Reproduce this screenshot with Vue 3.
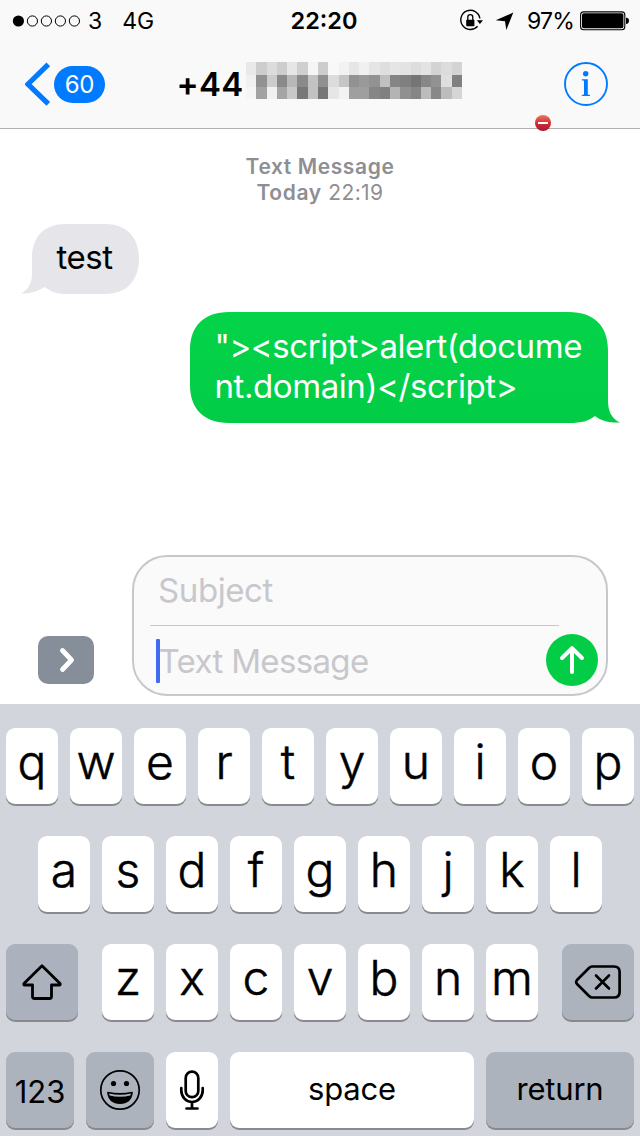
<script setup>
const mosaic = [
  'e9 cd dc cd e6 cf f5 cd f8 f2 e6 f0 e5 de e5 e3 dd e3 d3 dc d3',
  'f0 92 cc 8a b8 8a c2 90 dc c5 92 99 92 c0 85 80 75 87 92 df 80',
  'f5 a2 f0 a5 c8 78 c2 76 e6 f2 9f 9f 86 80 b4 90 86 bc 88 bc d5'
].map(row => row.split(' ').map(v => `#${v}${v}${v}`))
const topRow = 'qwertyuiop'.split('')
const homeRow = 'asdfghjkl'.split('')
const lowerRow = 'zxcvbnm'.split('')
const sent = ['"><script>alert(docume', 'nt.domain)<\/script>']
</script>

<template>
  <div class="phone">
    <header class="header">
      <div class="status">
        <div class="status-left">
          <svg class="dots" width="70" height="14" viewBox="0 0 70 14">
            <circle cx="6.4" cy="7" r="5.6" fill="#000" />
            <circle v-for="n in 4" :key="n" :cx="6.4 + n * 14" cy="7" r="5.1" fill="none" stroke="#000" stroke-width="1" />
          </svg>
          <span class="carrier">3</span>
          <span class="network">4G</span>
        </div>
        <span class="clock">22:20</span>
        <div class="status-right">
          <svg class="lock" width="24" height="24" viewBox="0 0 24 24" fill="none" stroke="#000">
            <path d="M20.9 9.5A9.6 9.6 0 1 0 18.6 17.2" stroke-width="1.4" />
            <path d="M17.8 11.3H24L20.9 15Z" fill="#000" stroke="none" />
            <rect x="7.2" y="10.8" width="8.2" height="6.4" rx=".7" fill="#000" stroke="none" />
            <path d="M8.8 11V8.2a2.5 2.5 0 0 1 5 0V11" stroke-width="1.3" />
          </svg>
          <svg class="arrow" width="19" height="19" viewBox="0 0 19 19"><path d="M18.3.6 11.3 18 10 9.3 .7 8.2Z" /></svg>
          <span class="percent">97%</span>
          <svg class="battery" width="50" height="20" viewBox="0 0 50 20">
            <rect x=".6" y=".9" width="44.2" height="17.8" rx="3" fill="none" stroke="#000" stroke-width="1.1" />
            <rect x="2" y="2.3" width="41.4" height="15" rx="1.8" />
            <path d="M46 6.5c2 .3 3 1.500 3 3.300s-1 3-3 3.300Z" />
          </svg>
        </div>
      </div>
      <nav class="nav">
        <div class="back">
          <svg width="26" height="44" viewBox="0 0 26 44"><path d="M23.300 2.300 2.900 22.200 23.300 41.800" fill="none" stroke="#007aff" stroke-width="5.200" /></svg>
          <span class="badge">60</span>
        </div>
        <div class="title">
          <span>+44</span>
          <div class="mosaic">
            <template v-for="(row, r) in mosaic" :key="r">
              <i v-for="(c, n) in row" :key="n" :style="{ background: c }"></i>
            </template>
          </div>
        </div>
        <svg class="info" width="46" height="46" viewBox="0 0 46 46" fill="#007aff">
          <circle cx="23" cy="23" r="21" fill="none" stroke="#007aff" stroke-width="1.900" />
          <circle cx="22.700" cy="12.700" r="2.700" />
          <path d="M18.800 18.200H24.800V33.400L27 34V35H18.800V34L21 33.400V19.800L18.800 19.300Z" />
        </svg>
      </nav>
      <svg class="stop" width="16" height="16" viewBox="0 0 16 16">
        <defs><linearGradient id="red" x2="0" y2="1"><stop stop-color="#ea7a5c" /><stop offset=".5" stop-color="#d32f32" /><stop offset="1" stop-color="#a5173b" /></linearGradient></defs>
        <circle cx="8" cy="8" r="8" fill="url(#red)" />
        <rect x="3" y="7" width="10" height="2" fill="#fff" />
      </svg>
    </header>

    <main class="thread">
      <div class="stamp">
        <div class="kind">Text Message</div>
        <div class="when"><b>Today</b> <span>22:19</span></div>
      </div>
      <div class="bubble received">
        <svg class="shape" width="119" height="70" viewBox="21 224 119 70">
          <path fill="#e5e5ea" d="M66 224H105C127 224 139 238 139 258.500C139 280 127 294 105 294H66C56 294 50 291 45 287C38 291 30 294 21 293.500C29 289 32 282 32 274V258C32 237 44 224 66 224Z" />
        </svg>
        <span class="line">test</span>
      </div>
      <div class="bubble sent">
        <svg class="shape" width="430" height="111" viewBox="190 312 430 111">
          <defs><linearGradient id="green" x2="0" y2="1"><stop stop-color="#04d449" /><stop offset="1" stop-color="#02cc46" /></linearGradient></defs>
          <path fill="url(#green)" d="M229 312H569C594 312 608 326 608 350V400C608 411 611 418 620 422.500C610 423 601 421 595 416C588 421 582 423 569 423H229C204 423 190 409 190 385V350C190 326 204 312 229 312Z" />
        </svg>
        <span v-for="(l, i) in sent" :key="i" class="line">{{ l }}</span>
      </div>
      <div class="compose">
        <div class="expand">
          <svg width="16" height="26" viewBox="0 0 16 26"><path d="M3.500 3.500 12.500 13 3.500 22.500" fill="none" stroke="#fff" stroke-width="4.800" stroke-linecap="round" stroke-linejoin="round" /></svg>
        </div>
        <div class="field">
          <div class="subject"><span>Subject</span></div>
          <div class="message">
            <i class="caret"></i>
            <span class="hint">Text Message</span>
            <svg class="send" width="52" height="52" viewBox="0 0 52 52">
              <circle cx="26" cy="26" r="26" fill="#03cc46" />
              <path d="M26 38V14.500M16 24 26 14.200 36 24" fill="none" stroke="#fff" stroke-width="4" stroke-linecap="round" stroke-linejoin="round" />
            </svg>
          </div>
        </div>
      </div>
    </main>

    <section class="keyboard">
      <div class="row"><div v-for="k in topRow" :key="k" class="key"><span>{{ k }}</span></div></div>
      <div class="row"><div v-for="k in homeRow" :key="k" class="key"><span>{{ k }}</span></div></div>
      <div class="row spread">
        <div class="key wide shift">
          <svg width="42" height="38" viewBox="0 0 42 38"><path d="M21 2.800 39 20.400Q39.800 22 38.200 22H30.500V33.500Q30.500 35.500 28.500 35.500H13.500Q11.500 35.500 11.500 33.500V22H3.800Q2.200 22 3 20.400Z" fill="none" stroke="#000" stroke-width="2.800" stroke-linejoin="round" /></svg>
        </div>
        <div class="letters"><div v-for="k in lowerRow" :key="k" class="key"><span>{{ k }}</span></div></div>
        <div class="key wide dark">
          <svg width="48" height="36" viewBox="0 0 48 36" fill="none" stroke="#000" stroke-linecap="round" stroke-linejoin="round">
            <path d="M18 2.500H40Q45.600 2.500 45.600 8V28Q45.600 33.500 40 33.500H18Q16.600 33.500 15 32L3 20Q1.400 18 3 16L15 4Q16.600 2.500 18 2.500Z" stroke-width="2.700" />
            <path d="M22 11.500 35 24.500M35 11.500 22 24.500" stroke-width="2.600" />
          </svg>
        </div>
      </div>
      <div class="row">
        <div class="key fn dark"><span class="num">123</span></div>
        <div class="key fn dark">
          <svg width="42" height="42" viewBox="0 0 42 42">
            <circle cx="21" cy="21" r="19.200" fill="none" stroke="#000" stroke-width="1.700" />
            <circle cx="14.500" cy="14.500" r="2.600" /><circle cx="27.500" cy="14.500" r="2.600" />
            <path d="M9 23.600Q21 26 33 23.600Q31.500 34 21 34T9 23.600Z" stroke="#000" stroke-width="1.800" stroke-linejoin="round" />
            <path d="M10 24.500Q21 27 32 24.500L31.300 26.400Q21 29 10.700 26.400Z" fill="#acb3bd" />
          </svg>
        </div>
        <div class="key">
          <svg width="26" height="42" viewBox="0 0 26 42" fill="none" stroke="#000" stroke-width="2.700" stroke-linecap="round">
            <rect x="6.700" y="2.700" width="12.600" height="25.500" rx="6.300" />
            <path d="M2.300 19V21.500A10.700 11.500 0 0 0 23.700 21.500V19M13 33V39M7.500 39.500H18.500" />
          </svg>
        </div>
        <div class="key space"><span class="word">space</span></div>
        <div class="key return dark"><span class="word">return</span></div>
      </div>
    </section>
  </div>
</template>

<style>
body { margin: 0; background: #fff; }
</style>

<style scoped>
.phone { width: 640px; height: 1136px; overflow: hidden; display: flex; flex-direction: column; background: #fff; color: #000; font-family: Inter, "Liberation Sans", sans-serif; }
.phone svg { display: block; flex: none; }
span { white-space: pre; }
.header { position: relative; box-sizing: border-box; height: 129px; background: #f9f9f9; border-bottom: 1px solid #b2b2b2; }
.status { height: 41px; display: grid; grid-template-columns: 1fr auto 1fr; align-items: center; font-size: 23px; line-height: 41px; }
.status span { padding-top: 1px; }
.status-left, .status-right { display: flex; align-items: center; }
.status-left { padding-left: 12px; }
.carrier { margin-left: 6px; }
.network { margin-left: 20px; }
.status .clock { font-weight: 600; font-size: 23.5px; padding: 0 0 1px 8px; }
.status-right { justify-content: flex-end; padding-right: 10px; }
.arrow { margin-left: 12px; }
.percent { margin-left: 13px; letter-spacing: -.8px; }
.battery { margin-left: 6px; }
.nav { height: 85px; display: flex; align-items: center; padding-bottom: 1px; }
.back { display: flex; align-items: center; padding-left: 25px; width: 151.500px; }
.badge { margin: 1px 0 0 3px; width: 51px; height: 37px; border-radius: 19px; background: #007aff; color: #fff; font-size: 24px; line-height: 38px; text-align: center; letter-spacing: -.2px; }
.title { display: flex; font-size: 33px; font-weight: 600; line-height: 40px; width: 385.500px; }
.title span { letter-spacing: .3px; }
.mosaic { display: grid; grid-template-columns: repeat(21, 1fr); grid-template-rows: 13px 12px 12px; width: 216px; height: 37px; margin-top: -2px; margin-left: 2.500px; }
.info { margin-left: 1px; }
.stop { position: absolute; left: 535px; top: 115px; }
.thread { height: 575px; display: flex; flex-direction: column; }
.stamp { margin-top: 25px; text-align: center; font-size: 21px; line-height: 26px; color: #8e8e93; letter-spacing: .6px; }
.kind, .stamp b { font-weight: 600; }
.when span { letter-spacing: .4px; }
.bubble { position: relative; font-size: 33px; line-height: 40px; display: flex; flex-direction: column; letter-spacing: -.42px; }
.shape { position: absolute; top: 0; left: 0; z-index: 0; }
.line { position: relative; z-index: 1; }
.received { margin: 18px 0 0 21px; height: 57px; padding: 13px 0 0 35.500px; width: 83px; }
.sent { margin: 18px 0 0 190px; height: 97px; padding: 14px 0 0 24.500px; width: 405px; color: #fff; }
.compose { margin: 132px 0 0 38px; display: flex; align-items: flex-end; }
.expand { width: 56px; height: 48px; border-radius: 10px; background: #858e99; display: flex; align-items: center; justify-content: center; margin-bottom: 12px; padding-left: 2px; box-sizing: border-box; }
.field { box-sizing: border-box; width: 476px; height: 141px; margin-left: 38px; border: 2px solid #c7c7cc; border-radius: 35px; background: #fafafa; font-size: 33px; color: #c7c7cc; letter-spacing: -.4px; }
.subject { box-sizing: border-box; height: 69px; width: 409px; margin-left: 16px; border-bottom: 1px solid #c7c7cc; padding-left: 8px; line-height: 66px; }
.message { height: 68px; display: flex; align-items: center; padding-left: 22px; }
.caret { width: 4px; height: 44px; border-radius: 1px; background: #426bf2; margin-top: 2px; }
.hint { margin-left: -1.500px; padding-top: 2px; letter-spacing: -.65px; }
.send { margin-left: auto; margin-right: 8px; }
.keyboard { box-sizing: border-box; height: 432px; background: #d2d5db; padding: 24px 6px 0; display: flex; flex-direction: column; gap: 32px; }
.row, .letters { display: flex; gap: 12px; justify-content: center; }
.spread { justify-content: space-between; }
.key { width: 52px; height: 76px; border-radius: 9px; background: #fff; box-shadow: 0 2px 0 #888a8e; display: flex; align-items: center; justify-content: center; font-size: 48px; font-weight: 300; line-height: 76px; -webkit-text-stroke: .5px #000; }
.key > span { position: relative; top: -4px; }
.wide { width: 72px; }
.shift { background: #abb1bd; }
.dark { background: #acb3bd; }
.fn { width: 68px; }
.space { width: 244px; }
.return { width: 148px; }
.key > .num, .key > .word { font-size: 31px; font-weight: 400; -webkit-text-stroke: 0; }
.key > .num { top: 2px; }
.key > .word { top: -1px; letter-spacing: -.2px; }
</style>
